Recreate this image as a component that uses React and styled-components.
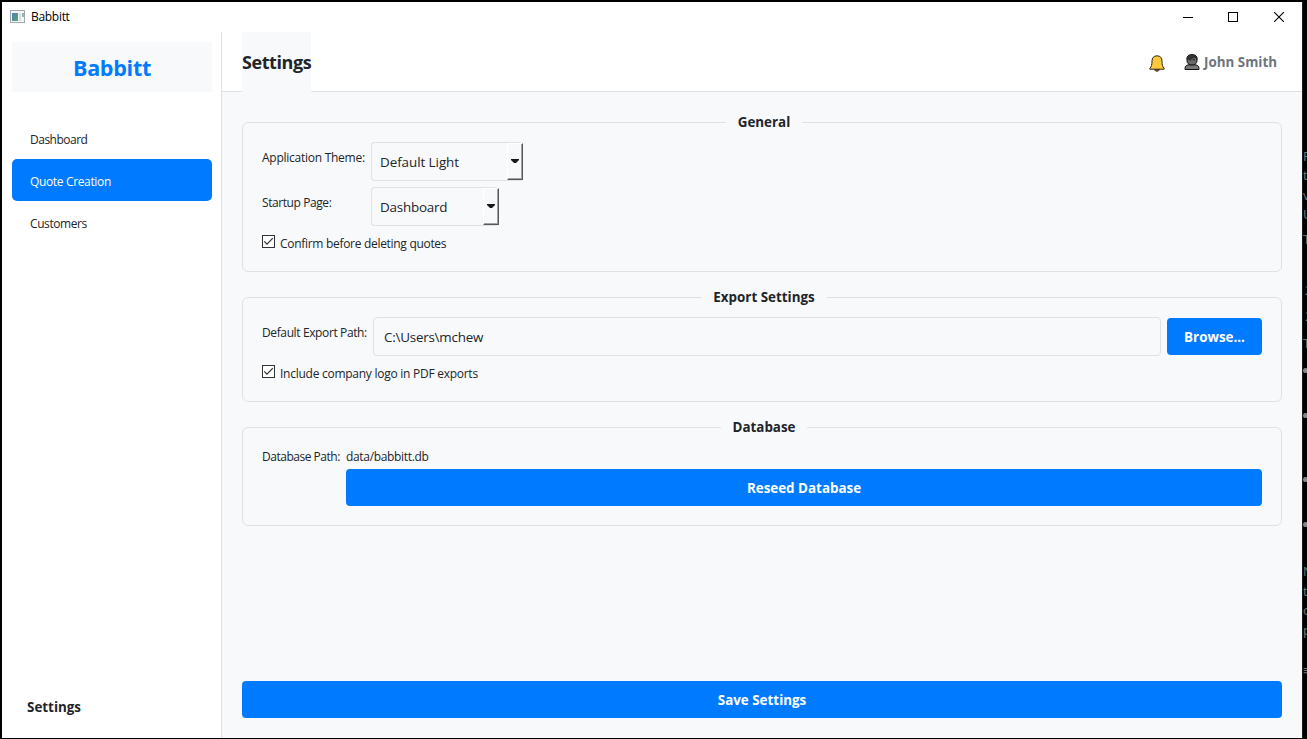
import React from "react";
import styled, { createGlobalStyle } from "styled-components";

const Global = createGlobalStyle`
  * { box-sizing: border-box; }
  html, body { margin: 0; padding: 0; }
  body {
    background: #000;
    font-family: "Open Sans", "Noto Sans", sans-serif;
    font-size: 12px;
    color: #212529;
    overflow: hidden;
  }
  button { font-family: inherit; }
`;

const Desktop = styled.div`
  display: flex;
  width: 1307px;
  height: 739px;
  padding: 2px 0 1px 2px;
  background: #000;
  overflow: hidden;
`;

const Window = styled.div`
  display: flex;
  flex-direction: column;
  width: 1300px;
  height: 736px;
  background: #fff;
`;

const Backdrop = styled.div`
  width: 5px;
  height: 736px;
  border-left: 1px solid #1b1b1b;
  overflow: hidden;
  color: #777;
  font-size: 13px;
`;

const Glyph = styled.div`
  height: 16px;
  margin-top: ${(p) => p.$gap}px;
  margin-left: ${(p) => p.$x ?? 0}px;
  line-height: 16px;
  white-space: nowrap;
`;

const Dot = styled.div`
  width: 5px;
  height: 5px;
  margin-top: ${(p) => p.$gap}px;
  border-radius: 50%;
  background: #888;
`;

const TitleBar = styled.div`
  display: flex;
  align-items: center;
  height: 30px;
  padding: 0 0 1px 8px;
  color: #000;
`;

const Text = styled.span`
  display: inline-block;
  white-space: nowrap;
  letter-spacing: ${(p) => p.$track ?? 0}px;
`;

const AppName = styled(Text)`
  margin-left: 5px;
  flex: 1;
`;

const WindowButtons = styled.div`
  display: flex;
  align-items: center;
  width: 137px;
  height: 29px;
`;

const WindowButton = styled.div`
  display: flex;
  justify-content: center;
  width: 45.5px;
  svg { display: block; }
`;

const Body = styled.div`
  display: flex;
  flex: 1;
`;

const Sidebar = styled.aside`
  display: flex;
  flex-direction: column;
  width: 220px;
  padding: 10px 9px 10px 10px;
  border-right: 1px solid #dee2e6;
`;

const Brand = styled.div`
  display: flex;
  align-items: center;
  justify-content: center;
  height: 50px;
  margin-bottom: 25px;
  background: #f8f9fb;
  color: #007bff;
  font-size: 21.5px;
  font-weight: 700;
`;

const NavItem = styled.div`
  display: flex;
  align-items: center;
  height: 42px;
  padding: 2px 18px 0;
  border-radius: 5px;
  background: ${(p) => (p.$active ? "#007bff" : "transparent")};
  color: ${(p) => (p.$active ? "#fff" : "#212529")};
`;

const SidebarFooter = styled.div`
  margin-top: auto;
  height: 42px;
  padding-left: 15px;
  line-height: 42px;
  font-size: 13.4px;
  font-weight: 700;
`;

const Main = styled.main`
  display: flex;
  flex-direction: column;
  flex: 1;
  background: #f8f9fb;
`;

const Header = styled.header`
  display: flex;
  align-items: flex-start;
  height: 60px;
  padding: 0 25px 0 20px;
  background: linear-gradient(#fff 59px, #dee2e6 59px);
`;

const PageTitle = styled.h1`
  width: 69px;
  height: 60px;
  margin: 0 auto 0 0;
  background: #f8f9fb;
  font-size: 18px;
  line-height: 61px;
`;

const BellIcon = styled.svg`
  width: 16px;
  height: 17px;
  margin: 23px 19px 0 0;
`;

const UserIcon = styled.svg`
  width: 16px;
  height: 17px;
  margin: 22px 4px 0 0;
`;

const UserName = styled(Text)`
  width: 73px;
  color: #6c757d;
  font-size: 13.4px;
  font-weight: 700;
  line-height: 60px;
`;

const Content = styled.div`
  display: flex;
  flex-direction: column;
  flex: 1;
  padding: 30px 20px 20px;
`;

const Group = styled.section`
  height: ${(p) => p.$height}px;
  margin-bottom: 25px;
  padding: 0 19px;
  border: 1px solid #dee2e6;
  border-radius: 6px;
`;

const Legend = styled.h2`
  width: ${(p) => p.$width}px;
  height: 18px;
  margin: -9px auto 10px;
  position: relative;
  left: 2px;
  background: #f8f9fb;
  font-size: 13.4px;
  line-height: 17px;
  text-align: center;
`;

const Row = styled.div`
  display: flex;
  align-items: flex-start;
  margin-bottom: 6px;
`;

const Label = styled.label`
  display: block;
  flex: none;
  width: ${(p) => (p.$width ? `${p.$width}px` : "auto")};
  height: ${(p) => (p.$top ?? 8) + 16}px;
  line-height: 16px;
  padding-top: ${(p) => p.$top ?? 8}px;
`;

const Combo = styled.div`
  display: flex;
  width: ${(p) => p.$width}px;
  height: 39px;
  padding-left: 8px;
  border: 1px solid #dee2e6;
  border-right: 0;
  border-radius: 4px;
  font-size: 13.4px;
  line-height: 38px;
`;

const ComboArrow = styled.div`
  display: flex;
  align-items: center;
  justify-content: center;
  width: 16px;
  height: 37px;
  margin-left: auto;
  padding-bottom: 1px;
  border: 1px solid #fff;
  border-right-color: #55585b;
  border-bottom-color: #55585b;
  box-shadow: inset -1px -1px #a0a2a4;
`;

const CheckRow = styled.div`
  display: flex;
  align-items: flex-start;
  height: 18px;
  gap: 5px;
  margin-top: 9px;
  line-height: 17px;
`;

const PathInput = styled.div`
  flex: 1;
  height: 39px;
  margin-right: 6px;
  padding-left: 10px;
  border: 1px solid #dee2e6;
  border-radius: 4px;
  font-size: 13.4px;
  line-height: 38px;
`;

const Button = styled.button`
  display: block;
  width: ${(p) => (p.$width ? `${p.$width}px` : "100%")};
  height: 37px;
  margin: ${(p) => p.$margin ?? "0"};
  padding: 1px 0 0;
  border: 0;
  border-radius: 4px;
  background: #007bff;
  color: #fff;
  font-size: 13.4px;
  font-weight: 700;
`;

const DbValue = styled.div`
  flex: 1;
`;

const CheckBox = styled.svg`
  display: block;
  flex: none;
  width: 13px;
  height: 13px;
`;

const Check = () => (
  <CheckBox viewBox="0 0 13 13">
    <rect x="0.5" y="0.5" width="12" height="12" fill="#fff" stroke="#333" />
    <path d="M2.2 6.4 5 9.2 10.8 3.2" fill="none" stroke="#333" strokeWidth="1.2" />
  </CheckBox>
);

const Arrow = () => (
  <svg width="8" height="4" viewBox="0 0 8 4">
    <path d="M0 0h8v1L5 4H3L0 1z" fill="#16191c" />
  </svg>
);

export default function App() {
  return (
    <>
      <Global />
      <Desktop>
        <Window>
          <TitleBar>
            <svg width="16" height="14" viewBox="0 0 16 14">
              <defs>
                <linearGradient id="pane" x1="0" y1="0" x2="1" y2="1">
                  <stop offset="0" stopColor="#4b7fb0" />
                  <stop offset="1" stopColor="#58a878" />
                </linearGradient>
              </defs>
              <rect x="0.5" y="0.5" width="14" height="12" fill="#f4f4f4" stroke="#a3a8ad" />
              <rect x="2" y="3" width="6" height="8" fill="url(#pane)" />
              <rect x="9" y="3" width="2" height="8" fill="#ddd" />
              <rect x="12" y="3" width="2" height="4" fill="#8fb7b5" />
            </svg>
            <AppName $track={-0.3}>Babbitt</AppName>
            <WindowButtons>
              <WindowButton>
                <svg width="10" height="10"><path d="M0 5.5h10" stroke="#000" /></svg>
              </WindowButton>
              <WindowButton>
                <svg width="10" height="10"><rect x="0.5" y="0.5" width="9" height="9" fill="none" stroke="#000" /></svg>
              </WindowButton>
              <WindowButton>
                <svg width="10" height="10"><path d="M0 0l10 10M10 0L0 10" stroke="#000" strokeWidth="1.1" /></svg>
              </WindowButton>
            </WindowButtons>
          </TitleBar>
          <Body>
            <Sidebar>
              <Brand><Text $track={-0.25}>Babbitt</Text></Brand>
              <NavItem><Text $track={-0.5}>Dashboard</Text></NavItem>
              <NavItem $active><Text $track={-0.35}>Quote Creation</Text></NavItem>
              <NavItem><Text $track={-0.42}>Customers</Text></NavItem>
              <SidebarFooter><Text>Settings</Text></SidebarFooter>
            </Sidebar>
            <Main>
              <Header>
                <PageTitle><Text $track={-0.42}>Settings</Text></PageTitle>
                <BellIcon viewBox="0 0 16 17">
                  <path d="M5.5 14.2h5c-.3 1.500-1.200 2.100-2.500 2.100s-2.200-.6-2.500-2.100z" fill="#8a4b20" stroke="#33251a" strokeWidth=".7" />
                  <path d="M8 .8c-3.300 0-5 2.200-5 5.200 0 4-.6 5.600-2.200 7.400v.8h14.400v-.8C13.600 11.600 13 10 13 6c0-3-1.700-5.200-5-5.200z" fill="#ffc83d" stroke="#2b2925" />
                </BellIcon>
                <UserIcon viewBox="0 0 16 17">
                  <path d="M1 15.500v-1.200C1 12 2.800 10.800 5 10.800h6c2.200 0 4 1.200 4 3.500v1.200z" fill="#777" stroke="#111" />
                  <path d="M3 4.500C3 2 5 .7 8 .7s5 1.300 5 3.800v2.300c0 2.500-2.200 4.200-5 4.200S3 9.300 3 6.800z" fill="#6a6a6a" stroke="#111" />
                  <path d="M3 5.500C2.500 2 5 .7 8 .7s5.500 1.300 5 4.800L11 3.200C9 4.200 6 4.500 3 5.500z" fill="#333" stroke="#111" strokeWidth=".5" />
                  <path d="M5.300 5.800h2M8.800 5.800h2" stroke="#111" />
                </UserIcon>
                <UserName>John Smith</UserName>
              </Header>
              <Content>
                <Group $height={150}>
                  <Legend $width={76}><Text>General</Text></Legend>
                  <Row>
                    <Label $width={109}><Text $track={-0.26}>Application Theme:</Text></Label>
                    <Combo $width={152}><Text $track={-0.05}>Default Light</Text><ComboArrow><Arrow /></ComboArrow></Combo>
                  </Row>
                  <Row>
                    <Label $width={109}><Text $track={-0.42}>Startup Page:</Text></Label>
                    <Combo $width={128}><Text $track={-0.2}>Dashboard</Text><ComboArrow><Arrow /></ComboArrow></Combo>
                  </Row>
                  <CheckRow><Check /><Text $track={-0.3}>Confirm before deleting quotes</Text></CheckRow>
                </Group>
                <Group $height={105}>
                  <Legend $width={125}><Text>Export Settings</Text></Legend>
                  <Row>
                    <Label $width={111}><Text $track={-0.38}>Default Export Path:</Text></Label>
                    <PathInput><Text $track={-0.22}>C:\Users\mchew</Text></PathInput>
                    <Button $width={95} $margin="1px 0 0"><Text>Browse...</Text></Button>
                  </Row>
                  <CheckRow><Check /><Text $track={-0.26}>Include company logo in PDF exports</Text></CheckRow>
                </Group>
                <Group $height={99}>
                  <Legend $width={86}><Text>Database</Text></Legend>
                  <Row>
                    <Label $width={84} $top={2}><Text $track={-0.48}>Database Path:</Text></Label>
                    <DbValue>
                      <Label $top={2}><Text $track={-0.33}>data/babbitt.db</Text></Label>
                      <Button $margin="4px 0 0"><Text>Reseed Database</Text></Button>
                    </DbValue>
                  </Row>
                </Group>
                <Button $margin="auto 0 0"><Text>Save Settings</Text></Button>
              </Content>
            </Main>
          </Body>
        </Window>
        <Backdrop>
          <Glyph $gap={146}>P</Glyph>
          <Glyph $gap={3}>t</Glyph>
          <Glyph $gap={4}>v</Glyph>
          <Glyph $gap={3}>U</Glyph>
          <Glyph $gap={9}>T</Glyph>
          <Glyph $gap={35} $x={2}>2</Glyph>
          <Glyph $gap={10} $x={2}>2</Glyph>
          <Glyph $gap={11}>T</Glyph>
          <Dot $gap={17} />
          <Dot $gap={40} />
          <Dot $gap={59} />
          <Dot $gap={40} />
          <Glyph $gap={36}>N</Glyph>
          <Glyph $gap={4}>t</Glyph>
          <Glyph $gap={3}>o</Glyph>
          <Glyph $gap={4}>p</Glyph>
          <Glyph $gap={24}>≡</Glyph>
        </Backdrop>
      </Desktop>
    </>
  );
}
